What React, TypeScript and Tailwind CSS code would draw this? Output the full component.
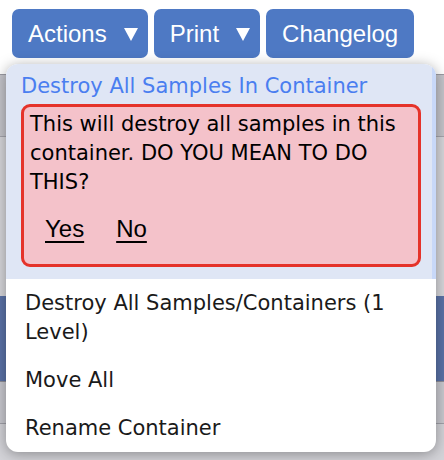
import type { ReactNode } from "react";

const MENU_FONT = { fontFamily: '"DejaVu Sans", Verdana, sans-serif' };

function Caret() {
  return (
    <svg width="14" height="14" viewBox="0 0 14 14" className="ml-[17px] shrink-0">
      <polygon points="0,1 14,1 7,14" fill="white" />
    </svg>
  );
}

function HeaderButton({ children, caret }: { children: ReactNode; caret?: boolean }) {
  return (
    <button
      className={
        "flex h-[49px] items-center rounded-[7px] bg-[#4e79c4] pl-4 text-[24px] text-white " +
        (caret ? "pr-[10px]" : "pr-4")
      }
    >
      {children}
      {caret && <Caret />}
    </button>
  );
}

function MenuItem({ children }: { children: ReactNode }) {
  return (
    <div className="pb-[9px] pl-[19px] pr-4 pt-[10px] text-[21px] leading-[29px] text-[#1a1a1a]">
      {children}
    </div>
  );
}

export default function App() {
  return (
    <div
      className="relative h-[460px] w-[444px] overflow-hidden bg-[#d3d3d8]"
      style={{ fontFamily: '"Liberation Sans", Arial, sans-serif' }}
    >
      {/* page behind the dropdown */}
      <div className="flex h-[75px] items-start gap-[6px] border-b border-[#9a9aa2] bg-white pl-3 pt-[9px]">
        <HeaderButton caret>Actions</HeaderButton>
        <HeaderButton caret>Print</HeaderButton>
        <HeaderButton>Changelog</HeaderButton>
      </div>
      <div className="h-[62px] border-b border-[#a4a4ac] bg-[#c4c4ca]" />
      <div className="h-[159px] bg-[#d6d6da]" />
      <div className="h-[86px] border-b border-[#8e8e98] bg-[#5a72a7]" />
      <div className="h-[42px] border-b border-[#a0a0a8] bg-[#c8c8ce]" />

      {/* dropdown */}
      <div
        className="absolute left-[6px] top-[64px] w-[430px] overflow-hidden rounded-[12px] bg-white shadow-[0_2px_14px_rgba(0,0,0,0.35)]"
        style={MENU_FONT}
      >
        <div className="border-r-4 border-[#c8d8f8] bg-[#dfe6f5] pb-3 pl-[15px] pr-[11px] pt-2">
          <div className="text-[21px] leading-[29px] text-[#4a7ef0]">
            Destroy All Samples In Container
          </div>
          <div className="mt-[3px] rounded-[9px] border-[3px] border-[#e5332a] bg-[#f4c2ca] pb-[21px] pl-[6px] pr-2 pt-[3px] text-[21px] leading-[29px] text-black">
            <p>This will destroy all samples in this container. DO YOU MEAN TO DO THIS?</p>
            <div
              className="mt-[17px] flex gap-[32px] pl-[15px]"
              style={{ fontFamily: '"Liberation Sans", Arial, sans-serif' }}
            >
              <a className="text-[24px] underline underline-offset-[4px]">Yes</a>
              <a className="text-[24px] underline underline-offset-[4px]">No</a>
            </div>
          </div>
        </div>
        <MenuItem>Destroy All Samples/Containers (1 Level)</MenuItem>
        <MenuItem>Move All</MenuItem>
        <MenuItem>Rename Container</MenuItem>
      </div>
    </div>
  );
}
